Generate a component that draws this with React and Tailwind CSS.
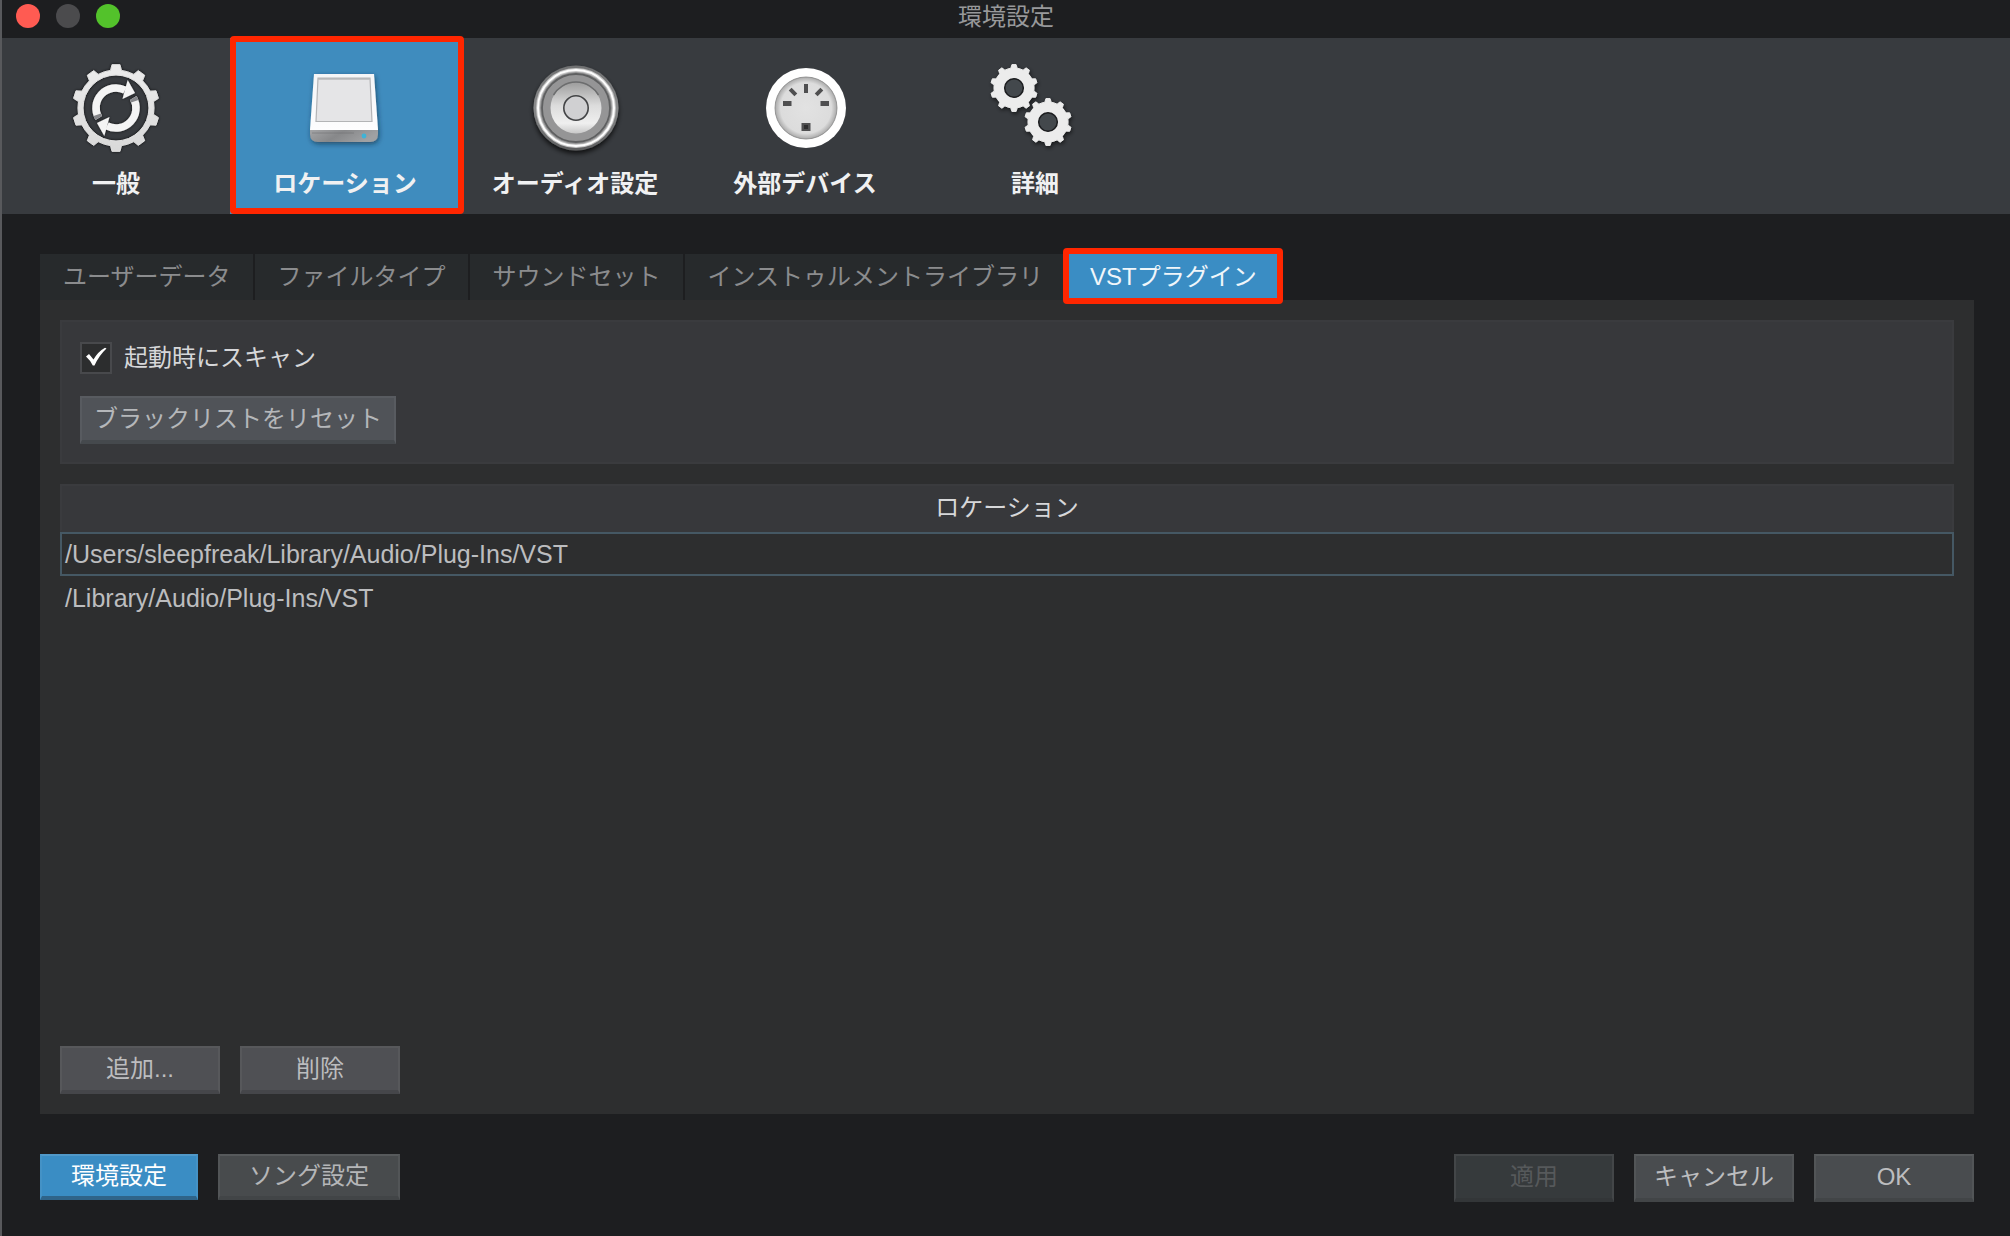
import { useState } from 'react'

const CATEGORIES = [
  { id: 'general', label: '一般', Icon: GeneralIcon },
  { id: 'locations', label: 'ロケーション', Icon: DriveIcon },
  { id: 'audio', label: 'オーディオ設定', Icon: SpeakerIcon },
  { id: 'devices', label: '外部デバイス', Icon: MidiIcon },
  { id: 'advanced', label: '詳細', Icon: GearsIcon },
]

const TABS = ['ユーザーデータ', 'ファイルタイプ', 'サウンドセット', 'インストゥルメントライブラリ', 'VSTプラグイン']

const LOCATIONS = ['/Users/sleepfreak/Library/Audio/Plug-Ins/VST', '/Library/Audio/Plug-Ins/VST']

// Outline of a ten-toothed gear; half widths are in degrees.
function gearPath(cx, cy, outer, root, tipHalf, baseHalf) {
  const point = (radius, degrees) => {
    const angle = ((degrees - 90) * Math.PI) / 180
    return `${(cx + radius * Math.cos(angle)).toFixed(2)} ${(cy + radius * Math.sin(angle)).toFixed(2)}`
  }
  let d = ''
  for (let i = 0; i < 10; i += 1) {
    const a = i * 36
    d += `${i === 0 ? 'M' : 'L'}${point(root, a - baseHalf)}L${point(outer, a - tipHalf)}L${point(outer, a + tipHalf)}L${point(root, a + baseHalf)}`
    d += `A${root} ${root} 0 0 1 ${point(root, a + 36 - baseHalf)}`
  }
  return `${d}Z`
}

function circlePath(cx, cy, r) {
  return `M${cx - r} ${cy}a${r} ${r} 0 1 0 ${r * 2} 0a${r} ${r} 0 1 0 ${-r * 2} 0Z`
}

function GeneralIcon() {
  return (
    <svg viewBox="-48 -48 96 96" className="size-24 overflow-visible" aria-hidden="true">
      <defs>
        <linearGradient id="gear-fill" x1="0" y1="0" x2="0" y2="1">
          <stop offset="0" stopColor="#ececec" />
          <stop offset="1" stopColor="#d9d9d9" />
        </linearGradient>
        <filter id="gear-shadow" x="-20%" y="-20%" width="140%" height="140%">
          <feDropShadow dx="0" dy="0" stdDeviation="1.5" floodColor="#000" floodOpacity="0.8" />
        </filter>
      </defs>
      <path
        d={gearPath(0, 0, 43.5, 38, 5.2, 8.2) + circlePath(0, 0, 33)}
        fill="url(#gear-fill)"
        fillRule="evenodd"
        stroke="#e2e2e2"
        strokeWidth="1"
        strokeLinejoin="round"
        filter="url(#gear-shadow)"
      />
      <g filter="url(#gear-shadow)">
        {[0, 180].map((turn) => (
          <g key={turn} transform={`rotate(${turn})`}>
            <path d="M-17.3 10A20 20 0 0 1 9 -17.9" fill="none" stroke="#f4f4f4" strokeWidth="7.5" />
            <path d="M-20.6 11.9A23.8 23.8 0 0 1 -22.4 8L-15.2 5.4A16.2 16.2 0 0 0 -14 8.1Z" fill="#85868a" />
            <path d="M11.7 -28L19 -15L6.5 -9Z" fill="#f4f4f4" />
          </g>
        ))}
      </g>
    </svg>
  )
}

function DriveIcon() {
  return (
    <svg viewBox="-48 -48 96 96" className="size-24 overflow-visible" aria-hidden="true">
      <defs>
        <linearGradient id="drive-top" x1="0" y1="0" x2="0" y2="1">
          <stop offset="0" stopColor="#f4f5f7" />
          <stop offset="1" stopColor="#fdfdfe" />
        </linearGradient>
        <linearGradient id="drive-front" x1="0" y1="0" x2="1" y2="0.3">
          <stop offset="0" stopColor="#a5a6a8" />
          <stop offset="0.5" stopColor="#87888a" />
          <stop offset="1" stopColor="#a0a1a3" />
        </linearGradient>
        <filter id="drive-shadow" x="-20%" y="-20%" width="140%" height="150%">
          <feDropShadow dx="1" dy="2" stdDeviation="2.5" floodColor="#0b2538" floodOpacity="0.6" />
        </filter>
      </defs>
      <g filter="url(#drive-shadow)">
        <path d="M-35 21H33V26Q33 34 25 34H-27Q-35 34 -35 26Z" fill="url(#drive-front)" />
        <path d="M-31 -34H29L33 22H-35Z" fill="url(#drive-top)" />
      </g>
      <path d="M-27 -30H25L27 13.5H-29Z" fill="#e5e5e7" stroke="#b3b4b6" strokeWidth="1.2" />
      <path d="M-26.5 -29H24.5" stroke="#a3a4a6" strokeWidth="1" />
      <path d="M-33 25H9" stroke="#6f7072" strokeWidth="0.8" opacity="0.7" />
      <circle cx="19" cy="28" r="2.4" fill="#3fb3d6" />
    </svg>
  )
}

function SpeakerIcon() {
  return (
    <svg viewBox="-48 -48 96 96" className="size-24 overflow-visible" aria-hidden="true">
      <defs>
        <linearGradient id="speaker-rim" x1="0" y1="0" x2="0" y2="1">
          <stop offset="0" stopColor="#6f7071" />
          <stop offset="0.5" stopColor="#8b8c8d" />
          <stop offset="1" stopColor="#5c5d5e" />
        </linearGradient>
        <linearGradient id="speaker-cone" x1="0" y1="0" x2="0" y2="1">
          <stop offset="0" stopColor="#9d9d9d" />
          <stop offset="0.45" stopColor="#dcdcdc" />
          <stop offset="0.8" stopColor="#efefef" />
          <stop offset="1" stopColor="#c8c8c8" />
        </linearGradient>
        <filter id="speaker-shadow" x="-20%" y="-20%" width="140%" height="150%">
          <feDropShadow dx="0" dy="3" stdDeviation="2.5" floodColor="#000" floodOpacity="0.75" />
        </filter>
      </defs>
      <g transform="translate(1 0)">
        <circle r="42.5" fill="url(#speaker-rim)" filter="url(#speaker-shadow)" />
        <circle r="38" fill="#929293" stroke="#c4c4c4" strokeWidth="4" />
        <circle r="38" fill="none" stroke="#fdfdfd" strokeWidth="2" />
        <circle r="34" fill="#959596" stroke="#5f6061" strokeWidth="1.8" />
        <circle r="25.5" fill="url(#speaker-cone)" />
        <path d="M-22.5 -13A26 26 0 0 1 22.5 -13" fill="none" stroke="#6c6d6e" strokeWidth="1.5" />
        <circle r="12.2" fill="#d0d0d2" stroke="#434446" strokeWidth="1.6" />
      </g>
    </svg>
  )
}

function MidiIcon() {
  return (
    <svg viewBox="-48 -48 96 96" className="size-24 overflow-visible" aria-hidden="true">
      <defs>
        <radialGradient id="midi-face">
          <stop offset="0" stopColor="#e2e2e2" />
          <stop offset="0.82" stopColor="#dcdcdc" />
          <stop offset="1" stopColor="#a9a9a9" />
        </radialGradient>
      </defs>
      <g transform="translate(1 0)">
        <circle r="40" fill="#fff" />
        <circle r="31" fill="url(#midi-face)" stroke="#858585" strokeWidth="0.8" />
        <g fill="#4f4f50">
          <rect x="-2" y="-24" width="4" height="9" />
          <rect x="-2" y="-4" width="4" height="8" transform="translate(-13 -16) rotate(-45)" />
          <rect x="-2" y="-4" width="4" height="8" transform="translate(13 -16) rotate(45)" />
          <rect x="-23" y="-7" width="8.5" height="5" />
          <rect x="14.5" y="-7" width="8.5" height="5" />
          <rect x="-4.5" y="15" width="9" height="8" />
        </g>
        <rect x="-2" y="17" width="4" height="4" fill="#2d2d2e" />
      </g>
    </svg>
  )
}

function GearsIcon() {
  return (
    <svg viewBox="-48 -48 96 96" className="size-24 overflow-visible" aria-hidden="true">
      <defs>
        <filter id="gears-shadow" x="-30%" y="-30%" width="160%" height="160%">
          <feDropShadow dx="1" dy="2" stdDeviation="2" floodColor="#000" floodOpacity="0.6" />
        </filter>
      </defs>
      {[
        [-21, -20],
        [13, 14],
      ].map(([x, y]) => (
        <g key={x}>
          <path
            d={gearPath(x, y, 23.5, 20, 5, 9) + circlePath(x, y, 10)}
            fill="#ececec"
            fillRule="evenodd"
            stroke="#ececec"
            strokeLinejoin="round"
            filter="url(#gears-shadow)"
          />
          <circle cx={x} cy={y} r="9.3" fill="#43484c" stroke="#1d1e20" strokeWidth="1.5" />
        </g>
      ))}
    </svg>
  )
}

function Highlight({ className }) {
  return <span className={`pointer-events-none absolute z-10 rounded-[4px] border-6 border-[#ff2600] ${className}`} />
}

function TitleBar() {
  return (
    <header className="relative flex h-[38px] items-start justify-center bg-[#1d1e20]">
      <div className="absolute left-[14px] top-1 flex gap-4">
        <button type="button" aria-label="閉じる" className="size-6 rounded-full bg-[#ff5b52]" />
        <button type="button" aria-label="しまう" className="size-6 rounded-full bg-[#4b4b4d]" />
        <button type="button" aria-label="拡大" className="size-6 rounded-full bg-[#53c22b]" />
      </div>
      <h1 className="text-2xl leading-[34px] text-[#98999b]">環境設定</h1>
    </header>
  )
}

function CategoryBar({ active, onSelect }) {
  return (
    <nav className="flex bg-[#383b3f]">
      {CATEGORIES.map(({ id, label, Icon }) => (
        <button
          key={id}
          type="button"
          onClick={() => onSelect(id)}
          className={`relative flex h-44 w-[230px] shrink-0 flex-col items-center gap-3 pt-[22px] first:w-[228px] ${
            id === active ? 'bg-[#3f8cbe]' : ''
          }`}
        >
          <Icon />
          <span className="text-2xl leading-8 font-bold text-[#f0f1f2]">{label}</span>
          {id === active && <Highlight className="-top-0.5 -right-1 bottom-0 left-0" />}
        </button>
      ))}
    </nav>
  )
}

function TabBar({ active, onSelect }) {
  return (
    <div role="tablist" className="flex h-[46px]">
      {TABS.map((tab) => (
        <button
          key={tab}
          type="button"
          role="tab"
          aria-selected={tab === active}
          onClick={() => onSelect(tab)}
          className={`relative shrink-0 border-r-2 border-[#1d1e20] pr-[22px] pl-[23px] text-2xl leading-[46px] last:border-r-0 ${
            tab === active ? 'bg-[#3a8dc4] text-[#f0f6fa]' : 'bg-[#272a2c] text-[#8b8c8e]'
          }`}
        >
          {tab}
          {tab === active && <Highlight className="-top-1.5 -right-1 -bottom-1 -left-1" />}
        </button>
      ))}
    </div>
  )
}

const BUTTON_VARIANTS = {
  panel: 'h-12 border-t-[#57585b] border-x-[#57585b] border-b-[#45464a] bg-[#4f5054] text-[#bcbdbf]',
  group: 'h-12 border-t-[#585b60] border-x-[#585b60] border-b-[#45494d] bg-[#505358] text-[#b5b7ba]',
  footer: 'h-12 border-t-[#575a5c] border-x-[#525557] border-b-[#424547] bg-[#494c4f] text-[#bcbdbf]',
  page: 'h-[46px] border-t-[#575a5c] border-x-[#525557] border-b-[#424547] bg-[#484b4d] text-[#b5b6b8]',
  primary: 'h-[46px] border-t-[#5199c9] border-x-[#4492c6] border-b-[#2f6489] bg-[#3a8dc4] text-white',
  disabled: 'h-12 border-t-[#434648] border-x-[#434648] border-b-[#333638] bg-[#363a3c] text-[#56595b]',
}

function PushButton({ variant, className, ...props }) {
  return (
    <button
      type="button"
      className={`flex items-center justify-center border-2 border-b-4 text-2xl leading-8 whitespace-nowrap ${BUTTON_VARIANTS[variant]} ${className}`}
      {...props}
    />
  )
}

function ScanOptions() {
  const [scan, setScan] = useState(true)

  return (
    <section className="flex h-36 flex-col items-start gap-[22px] border-2 border-[#3a3b3e] bg-[#37383b] px-[18px] pt-5">
      <label className="flex items-center gap-3 text-2xl leading-8 text-[#d6d7d9]">
        <span className="relative size-8">
          <input
            type="checkbox"
            checked={scan}
            onChange={(event) => setScan(event.target.checked)}
            className="block size-8 appearance-none border-2 border-[#48494c] bg-[#2c2d2e]"
          />
          {scan && (
            <svg viewBox="0 0 32 32" className="pointer-events-none absolute inset-0 size-8" aria-hidden="true">
              <path d="M6 14.5L9 12L13.5 17.5Q18 9.5 25 5.7L26.5 6.5Q19 13.5 14.5 23.5L12.8 23.5Q10 18 6 14.5Z" fill="#fff" />
            </svg>
          )}
        </span>
        起動時にスキャン
      </label>
      <PushButton variant="group" className="px-3">
        ブラックリストをリセット
      </PushButton>
    </section>
  )
}

function LocationTable() {
  const [selected, setSelected] = useState(LOCATIONS[0])

  return (
    <table className="mt-5 w-full border-separate border-spacing-0 text-2xl">
      <thead>
        <tr>
          <th className="h-12 border-2 border-[#3a3b3e] border-b-[#37383b] bg-[#37383b] p-0 leading-8 font-normal text-[#d6d7d9]">
            ロケーション
          </th>
        </tr>
      </thead>
      <tbody>
        {LOCATIONS.map((path) => (
          <tr key={path} onClick={() => setSelected(path)}>
            <td
              className={`h-11 border-2 px-[3px] py-0 text-[25px] leading-8 text-[#bcbdbf] ${
                path === selected ? 'border-[#455864]' : 'border-transparent'
              }`}
            >
              {path}
            </td>
          </tr>
        ))}
      </tbody>
    </table>
  )
}

export default function App() {
  const [category, setCategory] = useState('locations')
  const [tab, setTab] = useState('VSTプラグイン')

  return (
    <div className="flex min-h-screen flex-col border-l-2 border-[#58595c] bg-[#1d1e20] font-['Liberation_Sans','Noto_Sans_CJK_JP',sans-serif]">
      <TitleBar />
      <CategoryBar active={category} onSelect={setCategory} />

      <main className="flex flex-1 flex-col pt-10 pr-9 pl-[38px]">
        <TabBar active={tab} onSelect={setTab} />
        <div className="flex flex-1 flex-col bg-[#2d2e2f] p-5">
          <ScanOptions />
          <LocationTable />
          <div className="mt-auto flex gap-5 pt-5">
            <PushButton variant="panel" className="w-40">
              追加...
            </PushButton>
            <PushButton variant="panel" className="w-40">
              削除
            </PushButton>
          </div>
        </div>
      </main>

      <footer className="flex h-[122px] items-start pt-10 pr-9 pl-[38px]">
        <PushButton variant="primary" className="w-[158px]">
          環境設定
        </PushButton>
        <PushButton variant="page" className="ml-5 w-[182px]">
          ソング設定
        </PushButton>
        <div className="ml-auto flex gap-5">
          <PushButton variant="disabled" className="w-40" disabled>
            適用
          </PushButton>
          <PushButton variant="footer" className="w-40">
            キャンセル
          </PushButton>
          <PushButton variant="footer" className="w-40">
            OK
          </PushButton>
        </div>
      </footer>
    </div>
  )
}
